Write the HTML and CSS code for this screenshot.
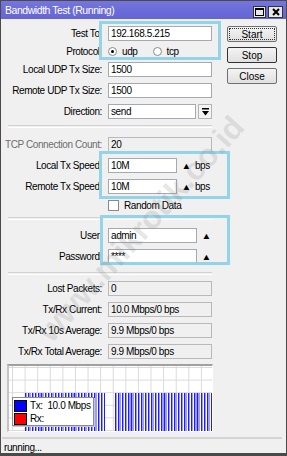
FILE: index.html
```html
<!DOCTYPE html>
<html lang="en">
<head>
<meta charset="UTF-8">
<meta name="viewport" content="width=device-width, initial-scale=1.0">
<title>Bandwidth Test</title>
<link rel="stylesheet" href="styles.css">
</head>
<body>

<div class="window">
  <div class="titlebar">
    <span class="title">Bandwidth Test (Running)</span>
    <span class="tb-btns">
      <span class="tb-btn"><svg width="9" height="8" viewBox="0 0 9 8"><rect x="0.5" y="0.5" width="8" height="7" fill="none" stroke="#000"/><rect x="0" y="0" width="9" height="2" fill="#000"/></svg></span>
      <span class="tb-btn"><svg width="8" height="8" viewBox="0 0 8 8"><path d="M1 1L7 7M7 1L1 7" stroke="#000" stroke-width="2"/></svg></span>
    </span>
  </div>

  <div class="main">
    <div class="form">
      <div class="row"><label>Test To:</label><div class="field">192.168.5.215</div></div>
      <div class="row row-radio"><label>Protocol:</label>
        <span class="radio checked"></span><span class="opt">udp</span>
        <span class="radio"></span><span class="opt">tcp</span>
      </div>
      <div class="row"><label>Local UDP Tx Size:</label><div class="field">1500</div></div>
      <div class="row"><label>Remote UDP Tx Size:</label><div class="field">1500</div></div>
      <div class="row"><label>Direction:</label><div class="field field-combo">send</div>
        <span class="drop"><svg width="7" height="8" viewBox="0 0 7 8"><rect x="0" y="0" width="7" height="1.5" fill="#000"/><path d="M0 3H7L3.5 7.5Z" fill="#000"/></svg></span>
      </div>
      <div class="sep sep-1"></div>
      <div class="row disabled"><label>TCP Connection Count:</label><div class="field readout">20</div></div>
      <div class="row"><label>Local Tx Speed:</label><div class="field field-speed">10M</div><span class="up">&#9650;</span><span class="unit">bps</span></div>
      <div class="row"><label>Remote Tx Speed:</label><div class="field field-speed">10M</div><span class="up">&#9650;</span><span class="unit">bps</span></div>
      <div class="row row-check"><label></label><span class="check"></span><span class="opt">Random Data</span></div>
      <div class="sep sep-2"></div>
      <div class="row"><label>User:</label><div class="field field-user">admin</div><span class="up up-user">&#9650;</span></div>
      <div class="row"><label>Password:</label><div class="field field-user">****</div><span class="up up-user">&#9650;</span></div>
      <div class="sep sep-3"></div>
      <div class="row"><label>Lost Packets:</label><div class="field readout">0</div></div>
      <div class="row row-stat"><label>Tx/Rx Current:</label><div class="field readout">10.0 Mbps/0 bps</div></div>
      <div class="row row-stat"><label>Tx/Rx 10s Average:</label><div class="field readout">9.9 Mbps/0 bps</div></div>
      <div class="row row-stat"><label>Tx/Rx Total Average:</label><div class="field readout">9.9 Mbps/0 bps</div></div>
    </div>

    <div class="actions">
      <button class="btn btn-focus"><span>Start</span></button>
      <button class="btn btn-default">Stop</button>
      <button class="btn">Close</button>
    </div>
  </div>

  <div class="graph">
    <div class="bars bars-1"></div>
    <div class="bars bars-2"></div>
    <div class="legend">
      <div class="legend-row"><span class="swatch swatch-tx"></span>Tx:&nbsp; 10.0 Mbps</div>
      <div class="legend-row"><span class="swatch swatch-rx"></span>Rx:</div>
    </div>
  </div>

  <div class="status">running...</div>

  <div class="mark mark-1"></div>
  <div class="mark mark-2"></div>
  <div class="mark mark-3"></div>

  <div class="watermark">www.mikrotik.co.id</div>
</div>

</body>
</html>
```

FILE: styles.css
```css
html, body { margin: 0; padding: 0; }
body { font-family: "Liberation Sans", Arial, sans-serif; font-size: 10px; letter-spacing: -0.4px; color: #000; background: #fff; }

.window { position: relative; width: 287px; height: 456px; box-sizing: border-box; border: 1px solid #4a4a4a; border-bottom-width: 3px; background: #f0f0f0; overflow: hidden; }

.titlebar { height: 19px; margin: -1px -1px 0; display: flex; align-items: center; justify-content: space-between; padding: 0 4px 0 5px; background: linear-gradient(#7676de, #6464d4); color: #fff; }
.title { font-size: 10.5px; letter-spacing: -0.45px; }
.tb-btns { display: flex; gap: 2px; margin-top: 4px; }
.tb-btn { width: 11px; height: 10px; border: 1px solid #333; background: #e8e8e8; display: flex; align-items: center; justify-content: center; }
.tb-btn + .tb-btn { width: 13px; }

.main { display: flex; padding-top: 7px; }
.form { width: 211px; display: flex; flex-direction: column; gap: 6px; }
.row { display: flex; align-items: center; height: 15px; }
.row label { width: 101px; flex: none; text-align: right; margin-right: 6px; white-space: nowrap; }
.field { width: 104px; height: 15px; box-sizing: border-box; border: 1px solid #a5a9b0; background: #fff; padding: 0 2px; line-height: 13px; white-space: nowrap; }
.field-combo { width: 88px; }
.field-speed { width: 69px; }
.field-user { width: 89px; }
.readout { background: #f0f0f0; border-color: #b9b9b9; }
.disabled label { color: #6d6d6d; }

.drop { width: 14px; height: 15px; box-sizing: border-box; margin-left: 2px; border: 1px solid #b5b5b5; background: #f4f4f4; display: flex; align-items: center; justify-content: center; }
.up { font-size: 9px; margin-left: 5px; letter-spacing: 0; transform: scaleX(1.1); }
.up-user { margin-left: 5px; }
.unit { margin-left: 4px; }

.row-radio { height: 9px; }
.radio { width: 9px; height: 9px; box-sizing: border-box; border: 1px solid #8a8a8a; border-radius: 50%; background: #fff; position: relative; margin-right: 5px; }
.radio.checked::after { content: ""; position: absolute; left: 2px; top: 2px; width: 3px; height: 3px; border-radius: 50%; background: #000; }
.radio + .opt { margin-right: 15px; }
.row-check { height: 11px; }
.check { width: 11px; height: 11px; box-sizing: border-box; border: 1px solid #8a8a8a; background: #fff; margin-right: 5px; }

.sep { height: 1px; border-top: 1px solid #d2d2d2; border-bottom: 1px solid #fff; margin-left: 7px; }
.sep-1 { margin-bottom: 3px; }
.sep-2 { margin-bottom: 2px; }
.sep-3 { margin-top: 2px; }

.actions { display: flex; flex-direction: column; gap: 5px; margin-left: 15px; }
.btn { width: 50px; height: 16px; padding: 0; box-sizing: border-box; border: 1px solid #707070; border-radius: 2px; background: linear-gradient(#f4f4f4, #e0e0e0); font: inherit; color: #000; display: flex; align-items: center; justify-content: center; }
.btn-focus span { display: flex; align-items: center; justify-content: center; width: 44px; height: 10px; border: 1px dotted #333; }
.btn-default { border-color: #333; }

.graph { position: relative; width: 206px; height: 68px; box-sizing: border-box; margin: 5px 0 0 6px; border-top: 2px solid #a0a0a0; border-left: 2px solid #c4c4c4; border-right: 1px solid #fff; border-bottom: 1px solid #fff;
  background-color: #fff;
  background-image: linear-gradient(90deg, #dadada 1px, transparent 1px), linear-gradient(#dadada 1px, transparent 1px);
  background-size: 12.6px 12.6px; background-position: 3px 1px; }
.bars { position: absolute; top: 27px; bottom: 0; background: repeating-linear-gradient(90deg, #1c1cff 0 1px, #9a9aff 1px 2.4px, #fff 2.4px 3.3px); }
.bars-1 { left: 16px; width: 80px; }
.bars-2 { left: 106px; right: 0; }

.legend { position: absolute; left: 3px; top: 31px; width: 82px; height: 29px; border: 1px solid #8c8c8c; background: #fff; box-shadow: 1px 1px 0 #c8c8c8; padding: 1px 0 0 1px; box-sizing: border-box; }
.legend-row { display: flex; align-items: center; height: 13px; font-size: 10px; white-space: nowrap; }
.swatch { flex: none; width: 11px; height: 10px; border: 1px solid #000; margin-right: 3px; }
.swatch-tx { background: #0000ff; }
.swatch-rx { background: #ff0000; }

.status { margin: 5px 4px 0 1px; border-top: 2px solid #d4d4d4; padding: 3px 0 0 2px; font-size: 10px; }

.mark { position: absolute; border: 3px solid #94d4e8; pointer-events: none; }
.mark-1 { left: 98px; top: 20px; width: 116px; height: 33px; }
.mark-2 { left: 98px; top: 150px; width: 125px; height: 42px; }
.mark-3 { left: 99px; top: 214px; width: 124px; height: 44px; }

.watermark { position: absolute; left: 140px; top: 228px; font-size: 32px; font-weight: bold; letter-spacing: 0; color: rgba(130, 130, 130, 0.2); transform: translate(-50%, -50%) rotate(-48deg); white-space: nowrap; pointer-events: none; }
```
